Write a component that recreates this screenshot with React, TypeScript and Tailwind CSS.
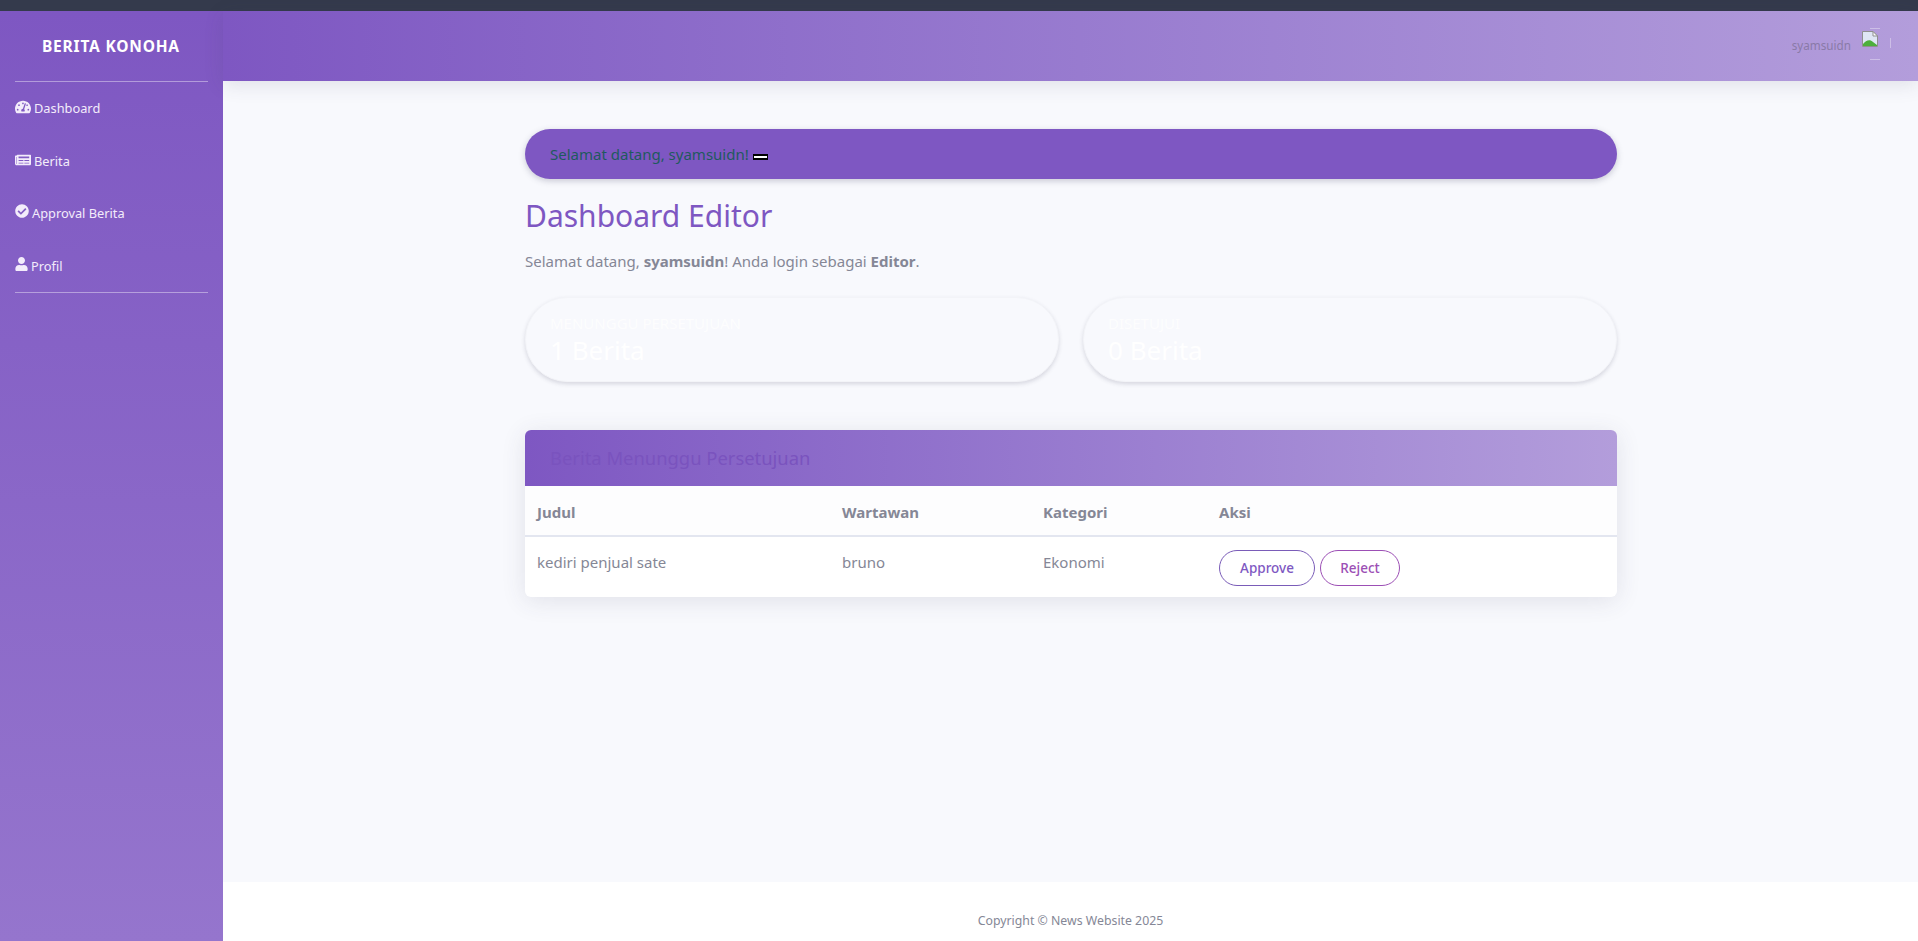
import React from 'react';
import { FaTachometerAlt, FaNewspaper, FaCheckCircle, FaUser } from 'react-icons/fa';

const menu = [
  { label: 'Dashboard', icon: FaTachometerAlt, iconSize: 'w-[16px] h-[16px]' },
  { label: 'Berita', icon: FaNewspaper, iconSize: 'w-[16px] h-[16px]' },
  { label: 'Approval Berita', icon: FaCheckCircle, iconSize: 'w-[14px] h-[14px]' },
  { label: 'Profil', icon: FaUser, iconSize: 'w-[13px] h-[14px]' },
];

const BrokenImage = () => (
  <svg viewBox="0 0 16 16" className="w-[16px] h-[16px]">
    <path d="M0.5 0.5H11L15.5 5V15.5H0.5Z" fill="#dfe6f5" stroke="#8f8f8f" strokeWidth="1" />
    <path d="M11 0.5V5H15.5Z" fill="#ffffff" stroke="#8f8f8f" strokeWidth="1" />
    <path d="M1 13C4 9 8 8 11 11L15 14V15H1Z" fill="#4caf3c" />
  </svg>
);

const StatCard = ({ title, value }: { title: string; value: string }) => (
  <div className="flex-1 h-[85px] rounded-[42px] bg-[#f8f9fd] pl-[24px] pt-[15px] text-white shadow-[0_2px_4px_rgba(60,60,90,0.18)] border border-[#f3f4f8]">
    <div className="text-[15px] leading-[20px] uppercase opacity-80">{title}</div>
    <div className="text-[26px] leading-[35px]">{value}</div>
  </div>
);

export default function App() {
  return (
    <div className="h-screen flex flex-col overflow-hidden bg-[#f8f9fd] text-[#858796] font-['Noto_Sans','Open_Sans',sans-serif]">
      <div className="h-[11px] bg-[#343a4c] shrink-0"></div>
      <div className="flex flex-1 min-h-0">
        {/* Sidebar */}
        <aside className="w-[223px] shrink-0 bg-gradient-to-b from-[#7e57c2] to-[#9575cd] px-[15px] text-white">
          <div className="h-[70px] flex items-center pl-[27px] pt-[2px] font-bold text-[15.5px] tracking-[0.8px]">BERITA KONOHA</div>
          <div className="border-t border-white/40"></div>
          <nav className="flex flex-col pt-[9px]">
            {menu.map((item) => {
              const Icon = item.icon;
              return (
                <a key={item.label} className="h-[52.5px] flex items-start gap-[3px] pt-[8px] text-[12.8px] leading-[20px] text-[#f3ecfb]">
                  <Icon className={item.iconSize} />
                  <span className="-mt-[1px]">{item.label}</span>
                </a>
              );
            })}
          </nav>
          <div className="border-t border-white/40 -mt-[9px]"></div>
        </aside>

        <div className="flex-1 min-w-0 flex flex-col">
          {/* Navbar */}
          <header className="h-[70px] shrink-0 relative z-10 bg-gradient-to-r from-[#7e57c2] to-[#b39ddb] flex items-center justify-end shadow-[0_4px_18px_rgba(60,60,90,0.13)] pr-[27px]">
            <span className="text-[11.7px] text-[#8a7aa8] mr-[8px]">syamsuidn</span>
            <div className="relative w-[32px] h-[32px] -mt-[4px] pl-[3px] pt-[3px]">
              <BrokenImage />
              <svg viewBox="0 0 32 32" className="absolute inset-0 w-[32px] h-[32px]">
                <path d="M11 0.5H21M31.5 10V20M11 31.5H21" stroke="#ffffff" strokeOpacity="0.35" strokeWidth="1" fill="none" />
              </svg>
            </div>
          </header>

          {/* Content */}
          <main className="flex-1 min-h-0 pl-[302px] pr-[301px] pt-[48px]">
            <div className="h-[50px] rounded-full bg-[#7e57c2] flex items-center pl-[25px] text-[15px] text-[#1f5a5e] shadow-[0_2px_6px_rgba(60,60,90,0.25)]">
              <span>Selamat datang, syamsuidn!</span>
              <span className="w-[15px] h-[6px] ml-[4px] mt-[5px] bg-white border-y-[2px] border-x-[1px] border-black"></span>
            </div>
            <h1 className="text-[30px] leading-[44px] text-[#7e57c2] mt-[15px] font-normal">Dashboard Editor</h1>
            <p className="text-[15px] leading-[24px] mt-[11px]">
              Selamat datang, <strong className="font-bold">syamsuidn</strong>! Anda login sebagai <strong className="font-bold">Editor</strong>.
            </p>
            <div className="flex gap-[24px] mt-[24px]">
              <StatCard title="Menunggu Persetujuan" value="1 Berita" />
              <StatCard title="Disetujui" value="0 Berita" />
            </div>

            <section className="mt-[48px] bg-white rounded-[6px] overflow-hidden shadow-[0_4px_24px_rgba(60,60,90,0.12)]">
              <div className="h-[56px] bg-gradient-to-r from-[#7e57c2] to-[#b39ddb] flex items-center pl-[25px] text-[18.4px] text-[#7a53be]">
                Berita Menunggu Persetujuan
              </div>
              <div className="grid grid-cols-[305px_201px_176px_1fr] h-[51px] items-center pl-[12px] pt-[3px] font-bold text-[15px] border-b-2 border-[#e3e6f0] bg-[#fdfdfe]">
                <span>Judul</span>
                <span>Wartawan</span>
                <span>Kategori</span>
                <span>Aksi</span>
              </div>
              <div className="grid grid-cols-[305px_201px_176px_1fr] h-[60px] pl-[12px] text-[15px] pt-[13px]">
                <span className="leading-[24px]">kediri penjual sate</span>
                <span className="leading-[24px]">bruno</span>
                <span className="leading-[24px]">Ekonomi</span>
                <div className="flex gap-[5px]">
                  <button className="w-[96px] h-[36px] rounded-full border border-[#7a5cb8] text-[#7e57c2] text-[13.5px] font-medium">Approve</button>
                  <button className="w-[80px] h-[36px] rounded-full border border-[#9c4fb5] text-[#9c4fb5] text-[13.5px] font-medium">Reject</button>
                </div>
              </div>
            </section>
          </main>

          {/* Footer */}
          <footer className="h-[59px] shrink-0 bg-white flex items-center justify-center pt-[19px] text-[12.3px] text-[#858796]">
            Copyright © News Website 2025
          </footer>
        </div>
      </div>
    </div>
  );
}
